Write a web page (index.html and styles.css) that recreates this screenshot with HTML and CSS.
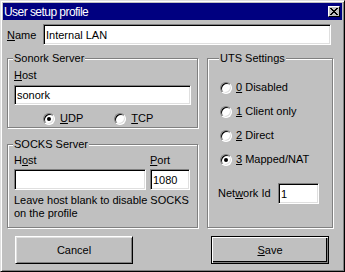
FILE: index.html
```html
<!DOCTYPE html>
<html lang="en">
<head>
  <meta charset="UTF-8">
  <title>User setup profile</title>
  <link rel="stylesheet" href="styles.css">
</head>
<body>
  <div class="window">
    <div class="titlebar">
      <span class="title">User setup profile</span>
      <span class="close-btn">
        <svg width="8" height="7" viewBox="0 0 8 7">
          <path d="M0 0h2v1h1v1h2v-1h1v-1h2v1h-1v1h-1v1h-1v1h1v1h1v1h1v1h-2v-1h-1v-1h-2v1h-1v1h-2v-1h1v-1h1v-1h1v-1h-1v-1h-1v-1h-1z" fill="#000"/>
        </svg>
      </span>
    </div>

    <div class="dialog">
      <div class="name-row">
        <label class="name-label"><u>N</u>ame</label>
        <input class="field name-field" type="text" value="Internal LAN">
      </div>

      <div class="groups">
        <div class="left-col">
          <fieldset class="group sonork">
            <legend>Sonork Server</legend>
            <label class="label"><u>H</u>ost</label>
            <input class="field host-field" type="text" value="sonork">
            <div class="proto-row">
              <span class="radio-item"><span class="radio checked"></span><span><u>U</u>DP</span></span>
              <span class="radio-item"><span class="radio"></span><span><u>T</u>CP</span></span>
            </div>
          </fieldset>

          <fieldset class="group socks">
            <legend>SOCKS Server</legend>
            <div class="socks-row">
              <div class="socks-host">
                <label class="label">H<u>o</u>st</label>
                <input class="field" type="text" value="">
              </div>
              <div class="socks-port">
                <label class="label"><u>P</u>ort</label>
                <input class="field" type="text" value="1080">
              </div>
            </div>
            <p class="hint">Leave host blank to disable SOCKS on the profile</p>
          </fieldset>
        </div>

        <fieldset class="group uts">
          <legend>UTS Settings</legend>
          <div class="uts-options">
            <span class="radio-item"><span class="radio"></span><span><u>0</u> Disabled</span></span>
            <span class="radio-item"><span class="radio"></span><span><u>1</u> Client only</span></span>
            <span class="radio-item"><span class="radio"></span><span><u>2</u> Direct</span></span>
            <span class="radio-item"><span class="radio checked"></span><span><u>3</u> Mapped/NAT</span></span>
          </div>
          <div class="network-row">
            <label class="label">Net<u>w</u>ork Id</label>
            <input class="field network-field" type="text" value="1">
          </div>
        </fieldset>
      </div>

      <div class="buttons">
        <button class="btn">Cancel</button>
        <button class="btn default"><u>S</u>ave</button>
      </div>
    </div>
  </div>
</body>
</html>
```

FILE: styles.css
```css
:root {
  --face: #c0c0c0;
  --light: #dfdfdf;
  --shadow: #808080;
  --dark: #000000;
  --title: #000080;
}

body {
  margin: 0;
  padding: 0;
  background-color: var(--face);
  font-family: 'Liberation Sans', Arial, sans-serif;
  font-size: 11px;
  color: #000;
}

u {
  text-decoration: underline;
  text-underline-offset: 1px;
}

.window {
  width: 345px;
  height: 272px;
  box-sizing: border-box;
  background-color: var(--face);
  border: 1px solid;
  border-color: var(--light) var(--dark) var(--dark) var(--light);
  box-shadow: inset 1px 1px 0 #fff, inset -1px -1px 0 var(--shadow);
  padding: 2px;
  display: flex;
  flex-direction: column;
}

.titlebar {
  height: 17px;
  background-color: var(--title);
  color: #fff;
  display: flex;
  align-items: center;
  justify-content: space-between;
  padding: 0 2px 0 1px;
  flex-shrink: 0;
}

.title {
  font-size: 12px;
  letter-spacing: -0.55px;
}

.close-btn {
  width: 12px;
  height: 11px;
  box-sizing: border-box;
  background-color: var(--face);
  border: 1px solid;
  border-color: #fff var(--dark) var(--dark) #fff;
  display: flex;
  align-items: center;
  justify-content: center;
}

.dialog {
  flex: 1;
  padding: 0 4px;
  display: flex;
  flex-direction: column;
}

.field {
  box-sizing: border-box;
  height: 20px;
  margin: 0;
  padding: 0 2px;
  background-color: #fff;
  border: 1px solid;
  border-color: var(--shadow) #fff #fff var(--shadow);
  box-shadow: inset 1px 1px 0 var(--dark), inset -1px -1px 0 var(--light);
  font-family: inherit;
  font-size: 11px;
  color: #000;
  outline: none;
}

.name-row {
  display: flex;
  align-items: center;
  margin-top: 4px;
}

.name-label {
  width: 36px;
}

.name-field {
  width: 288px;
  height: 21px;
}

.groups {
  display: flex;
  gap: 9px;
  margin-top: 7px;
}

.left-col {
  width: 191px;
  display: flex;
  flex-direction: column;
  gap: 10px;
}

.group {
  margin: 0;
  padding: 0 6px;
  min-width: 0;
  border: 1px solid var(--shadow);
  box-shadow: 1px 1px 0 #fff, inset 1px 1px 0 #fff;
}

.group legend {
  padding: 0 1px;
  margin-left: -1px;
  line-height: 13px;
  background-color: var(--face);
}

.label {
  display: block;
  line-height: 13px;
}

.sonork {
  padding-bottom: 2px;
}

.sonork .label {
  margin-top: 4px;
}

.host-field {
  width: 177px;
  margin-top: 3px;
}

.proto-row {
  display: flex;
  margin-top: 7px;
  padding-left: 29px;
  gap: 31px;
}

.radio-item {
  display: flex;
  align-items: center;
  gap: 5px;
  line-height: 13px;
}

.radio {
  width: 12px;
  height: 12px;
  box-sizing: border-box;
  border-radius: 50%;
  background-color: #fff;
  border: 1px solid;
  border-color: var(--shadow) #fff #fff var(--shadow);
  box-shadow: inset 1px 1px 0 var(--dark), inset -1px -1px 0 var(--light);
  display: flex;
  align-items: center;
  justify-content: center;
  flex-shrink: 0;
}

.radio.checked::after {
  content: "";
  width: 4px;
  height: 4px;
  border-radius: 50%;
  background-color: #000;
}

.socks {
  padding-bottom: 7px;
}

.socks-row {
  display: flex;
  gap: 4px;
  margin-top: 3px;
}

.socks-row .field {
  margin-top: 2px;
  height: 21px;
}

.socks-host .field {
  width: 132px;
}

.socks-port .field {
  width: 40px;
}

.hint {
  margin: 4px 0 0;
  line-height: 13px;
}

.uts {
  width: 126px;
  box-sizing: border-box;
  padding: 0 6px 0 12px;
}

.uts-options {
  display: flex;
  flex-direction: column;
  gap: 11px;
  margin-top: 16px;
}

.uts-options .radio-item {
  gap: 4px;
}

.network-row {
  display: flex;
  align-items: center;
  margin-top: 17px;
  margin-left: -2px;
}

.network-row .label {
  width: 60px;
}

.network-field {
  width: 41px;
  height: 21px;
}

.buttons {
  display: flex;
  justify-content: space-between;
  margin-top: 8px;
  padding: 0 9px 0 8px;
}

.btn {
  width: 118px;
  height: 28px;
  box-sizing: border-box;
  background-color: var(--face);
  border: 1px solid;
  border-color: #fff var(--dark) var(--dark) #fff;
  box-shadow: inset 1px 1px 0 var(--light), inset -1px -1px 0 var(--shadow);
  font-family: inherit;
  font-size: 11px;
  color: #000;
  padding: 0;
}

.btn.default {
  border: 1px solid var(--dark);
  box-shadow: inset 1px 1px 0 #fff, inset -1px -1px 0 var(--shadow), inset -2px -2px 0 var(--dark);
}
```
